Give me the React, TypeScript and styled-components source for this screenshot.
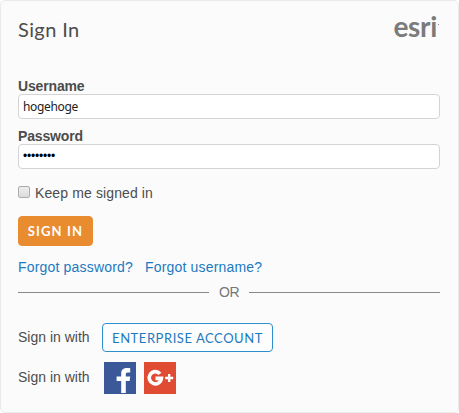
import React, { useState } from "react";
import styled, { createGlobalStyle } from "styled-components";

const GlobalStyle = createGlobalStyle`
  *, *::before, *::after { box-sizing: border-box; }
  body { margin: 0; background: #fff; overflow: hidden; }
`;

const Card = styled.main`
  width: 459px;
  height: 413px;
  padding: 0 18px 0 17px;
  display: flex;
  flex-direction: column;
  background: #fbfbfb;
  border: 1px solid #eaeaea;
  border-radius: 5px;
  color: #4c4c4c;
  font-family: "Liberation Sans", Arial, sans-serif;
  font-size: 14px;
  line-height: 16px;
`;

const Header = styled.header`
  display: flex;
  justify-content: space-between;
  height: 77px;
`;

const Title = styled.h1`
  margin: 16px 0 0;
  font: 400 20px/24px Lato, sans-serif;
  letter-spacing: 0.4px;
`;

const Logo = styled.div`
  display: flex;
  margin: 9px 1px 0 0;
  height: 32px;
  color: #7b7b7b;
  font: 700 28px/32px Lato, sans-serif;
  letter-spacing: -0.3px;
`;

const LogoDot = styled.span`
  width: 1px;
  height: 1px;
  margin: 14px 0 0 1px;
  background: #8d8d8d;
`;

const Field = styled.label`
  display: flex;
  flex-direction: column;
  height: 50px;
  font-weight: 700;
  letter-spacing: -0.15px;
`;

const Input = styled.input<{ $masked?: boolean }>`
  width: 422px;
  height: 25px;
  padding: 0 4px 1px;
  border: 1px solid #d4d4d4;
  border-radius: 4px;
  background: #fff;
  color: ${(p) => (p.$masked ? "#000" : "#222")};
  font: ${(p) => (p.$masked ? '12px "Liberation Sans"' : '12px "Noto Sans"')}, sans-serif;
  letter-spacing: ${(p) => (p.$masked ? "-0.2px" : "-0.35px")};
  outline: none;
`;

const Remember = styled.label`
  display: flex;
  align-items: center;
  gap: 5px;
  margin-top: 7px;
  height: 16px;
  letter-spacing: 0.12px;
`;

const Checkbox = styled.input`
  appearance: none;
  width: 12px;
  height: 12px;
  margin: 0 0 3px;
  border: 1px solid #adadad;
  border-radius: 2px;
  background: linear-gradient(#ededed, #dcdcdc);
`;

const Button = styled.button<{ $outlined?: boolean }>`
  flex: none;
  padding: 0;
  border-radius: 4px;
  width: ${(p) => (p.$outlined ? 171 : 75)}px;
  height: ${(p) => (p.$outlined ? 29 : 30)}px;
  border: 1px solid ${(p) => (p.$outlined ? "#2f8fce" : "#e98c2f")};
  background: ${(p) => (p.$outlined ? "#fdfdfd" : "#e98c2f")};
  color: ${(p) => (p.$outlined ? "#1b7ac0" : "#fff")};
  font: ${(p) => (p.$outlined ? 400 : 700)} 13px/16px Lato, sans-serif;
  letter-spacing: ${(p) => (p.$outlined ? 0.55 : 1.15)}px;
`;

const SubmitRow = styled.div`
  display: flex;
  margin-top: 15px;
`;

const Links = styled.nav`
  display: flex;
  gap: 12px;
  margin-top: 13px;
  white-space: nowrap;
  letter-spacing: 0.18px;
`;

const Link = styled.a`
  color: #1b7ac0;
  text-decoration: none;
`;

const Divider = styled.div`
  display: flex;
  align-items: center;
  gap: 10px;
  width: 422px;
  margin-top: 9px;
  color: #777;
  letter-spacing: -0.6px;

  &::before, &::after {
    content: "";
    flex: 1;
    height: 1px;
    background: #898989;
  }
`;

const Provider = styled.div<{ $top: number; $gap: number }>`
  display: flex;
  align-items: flex-start;
  margin-top: ${(p) => p.$top}px;
  gap: ${(p) => p.$gap}px;
`;

const ProviderLabel = styled.span<{ $offset: number }>`
  width: 72px;
  margin-top: ${(p) => p.$offset}px;
  white-space: nowrap;
`;

const Social = styled.div`
  display: flex;
  gap: 8px;

  svg { display: block; }
`;

const FacebookIcon = () => (
  <svg width="32" height="32" viewBox="0 0 32 32" aria-label="Facebook">
    <rect width="32" height="32" fill="#3b5998" />
    <path d="M17.200 31V19h-4.600v-4.500h4.600v-3.300C17.200 7.400 19.700 6 23 6c1.500 0 2.500.100 3.200.200v4.300h-2.400c-1.600 0-2 .700-2 1.900v2.100h4.400l-.600 4.500h-3.800v12z" fill="#fff" />
  </svg>
);

const GoogleIcon = () => (
  <svg width="32" height="32" viewBox="0 0 32 32" aria-label="Google Plus">
    <rect width="32" height="32" fill="#e04b34" />
    <path d="M16 11.800A6.100 6.100 0 1 0 17.400 16.400H11.500" fill="none" stroke="#fff" strokeWidth="3.600" />
    <path d="M25.200 12v8M21.200 16h8" stroke="#fff" strokeWidth="2.300" />
  </svg>
);

export default function App() {
  const [username, setUsername] = useState("hogehoge");
  const [password, setPassword] = useState("password");
  return (
    <>
      <GlobalStyle />
      <Card>
        <Header>
          <Title>Sign In</Title>
          <Logo>esri<LogoDot /></Logo>
        </Header>
        <Field>
          Username
          <Input value={username} onChange={(e) => setUsername(e.target.value)} />
        </Field>
        <Field>
          Password
          <Input $masked type="password" value={password} onChange={(e) => setPassword(e.target.value)} />
        </Field>
        <Remember><Checkbox type="checkbox" />Keep me signed in</Remember>
        <SubmitRow><Button>SIGN IN</Button></SubmitRow>
        <Links>
          <Link href="#">Forgot password?</Link>
          <Link href="#">Forgot username?</Link>
        </Links>
        <Divider>OR</Divider>
        <Provider $top={23} $gap={12}>
          <ProviderLabel $offset={6}>Sign in with</ProviderLabel>
          <Button $outlined>ENTERPRISE ACCOUNT</Button>
        </Provider>
        <Provider $top={10} $gap={14}>
          <ProviderLabel $offset={7}>Sign in with</ProviderLabel>
          <Social><FacebookIcon /><GoogleIcon /></Social>
        </Provider>
      </Card>
    </>
  );
}
